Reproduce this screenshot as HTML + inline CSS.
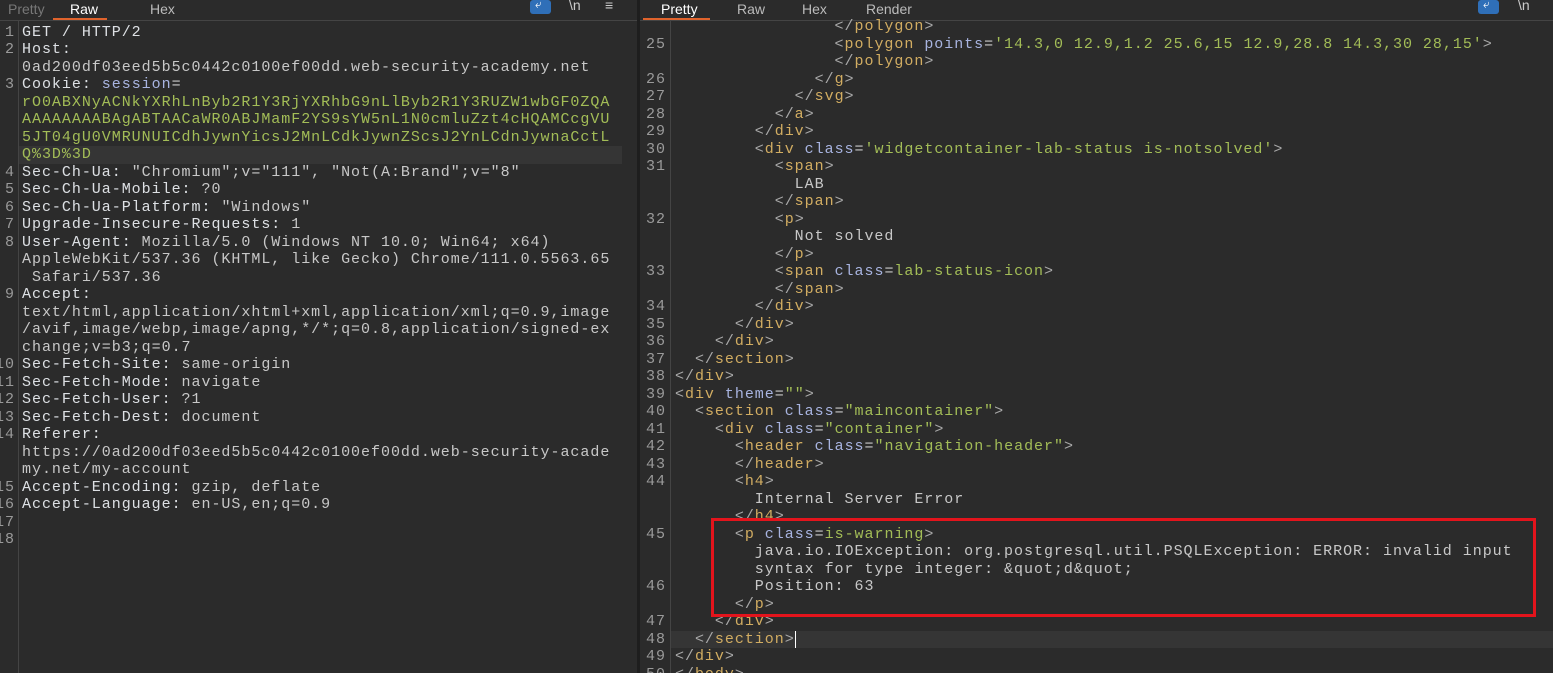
<!DOCTYPE html>
<html><head><meta charset="utf-8"><style>
*{margin:0;padding:0;box-sizing:border-box}
body{width:1553px;height:673px;background:#2b2b2b;overflow:hidden;position:relative;font-family:"Liberation Mono",monospace}
.pane{position:absolute;top:0;height:673px;overflow:hidden;background:#2b2b2b}
.tabs{position:absolute;left:0;right:0;top:0;height:21px;border-bottom:1px solid #444;font-family:"Liberation Sans",sans-serif;font-size:14px;color:#bbb}
.tab{position:absolute;top:1px}
.ul{position:absolute;top:18px;height:2px;background:#e0632c}
.row{position:absolute;height:17.5px;line-height:17.5px;font-size:15px;letter-spacing:0.97px;white-space:pre;color:#c8c8c8}
.num{position:absolute;height:17.5px;line-height:17.5px;font-size:15px;letter-spacing:0.97px;white-space:pre;color:#9a9a9a;text-align:right}
.g{color:#a3bd57}.b{color:#a8b4e0}.t{color:#d2ad62}.p{color:#a9a9a9}.w{color:#dde0e4}
.gut{position:absolute;top:21px;width:1px;height:660px;background:#444}
.ico{position:absolute;top:0;width:21px;height:14px;background:#2f6fb8;border-radius:3px}
</style></head><body>
<div class="pane" style="left:0;width:637px">
 <div class="tabs">
  <span class="tab" style="left:8px;color:#777">Pretty</span>
  <span class="tab" style="left:70px;color:#fff">Raw</span>
  <span class="tab" style="left:150px">Hex</span>
  <div class="ul" style="left:53px;width:54px"></div>
  <div class="ico" style="left:530px"><span style="position:absolute;left:5px;top:-3px;color:#fff;font-size:12px">⤶</span></div>
  <span class="tab" style="left:569px;top:-3px;color:#ccc">\n</span>
  <span class="tab" style="left:605px;top:-3px;color:#ccc">≡</span>
 </div>
 <div class="gut" style="left:18px"></div>
 <div style="position:absolute;left:19px;top:146px;width:603px;height:17.5px;background:#353535"></div>
 <div id="L"></div>
</div>
<div style="position:absolute;left:637px;top:0;width:3px;height:673px;background:#1e1e1e"></div>
<div class="pane" style="left:640px;width:913px">
 <div class="tabs">
  <span class="tab" style="left:21px;color:#fff">Pretty</span>
  <span class="tab" style="left:97px">Raw</span>
  <span class="tab" style="left:162px">Hex</span>
  <span class="tab" style="left:226px">Render</span>
  <div class="ul" style="left:3px;width:67px"></div>
  <div class="ico" style="left:838px"><span style="position:absolute;left:5px;top:-3px;color:#fff;font-size:12px">⤶</span></div>
  <span class="tab" style="left:878px;top:-3px;color:#ccc">\n</span>
 </div>
 <div class="gut" style="left:30px"></div>
 <div style="position:absolute;left:31px;top:630.75px;width:882px;height:17.5px;background:#353535"></div>
 <div id="R"></div>
 <div style="position:absolute;left:71px;top:518px;width:825px;height:99px;border:3px solid #e3141c"></div>
</div>
<script>
var L=[
["1",'<span class="w">GET / HTTP/2</span>'],
["2",'<span class="w">Host:</span>'],
["",'0ad200df03eed5b5c0442c0100ef00dd.web-security-academy.net'],
["3",'<span class="w">Cookie: </span><span class="b">session</span>='],
["",'<span class="g">rO0ABXNyACNkYXRhLnByb2R1Y3RjYXRhbG9nLlByb2R1Y3RUZW1wbGF0ZQA</span>'],
["",'<span class="g">AAAAAAAABAgABTAACaWR0ABJMamF2YS9sYW5nL1N0cmluZzt4cHQAMCcgVU</span>'],
["",'<span class="g">5JT04gU0VMRUNUICdhJywnYicsJ2MnLCdkJywnZScsJ2YnLCdnJywnaCctL</span>'],
["",'<span class="g">Q%3D%3D</span>'],
["4",'<span class="w">Sec-Ch-Ua:</span> "Chromium";v="111", "Not(A:Brand";v="8"'],
["5",'<span class="w">Sec-Ch-Ua-Mobile:</span> ?0'],
["6",'<span class="w">Sec-Ch-Ua-Platform:</span> "Windows"'],
["7",'<span class="w">Upgrade-Insecure-Requests:</span> 1'],
["8",'<span class="w">User-Agent:</span> Mozilla/5.0 (Windows NT 10.0; Win64; x64)'],
["",'AppleWebKit/537.36 (KHTML, like Gecko) Chrome/111.0.5563.65'],
["",' Safari/537.36'],
["9",'<span class="w">Accept:</span>'],
["",'text/html,application/xhtml+xml,application/xml;q=0.9,image'],
["",'/avif,image/webp,image/apng,*/*;q=0.8,application/signed-ex'],
["",'change;v=b3;q=0.7'],
["10",'<span class="w">Sec-Fetch-Site:</span> same-origin'],
["11",'<span class="w">Sec-Fetch-Mode:</span> navigate'],
["12",'<span class="w">Sec-Fetch-User:</span> ?1'],
["13",'<span class="w">Sec-Fetch-Dest:</span> document'],
["14",'<span class="w">Referer:</span>'],
["",'https://0ad200df03eed5b5c0442c0100ef00dd.web-security-acade'],
["",'my.net/my-account'],
["15",'<span class="w">Accept-Encoding:</span> gzip, deflate'],
["16",'<span class="w">Accept-Language:</span> en-US,en;q=0.9'],
["17",''],["18",'']];
var h='';
L.forEach(function(r,i){var t=23.5+i*17.5;
h+='<div class="num" style="right:622px;width:40px;top:'+t+'px">'+r[0]+'</div>';
h+='<div class="row" style="left:22px;top:'+t+'px">'+r[1]+'</div>';});
document.getElementById('L').innerHTML=h;
function tg(n){return '<span class="p">&lt;</span><span class="t">'+n+'</span>'}
function ct(n){return '<span class="p">&lt;/</span><span class="t">'+n+'</span><span class="p">&gt;</span>'}
var gt='<span class="p">&gt;</span>';
function at(a,v){return ' <span class="b">'+a+'</span>=<span class="g">'+v+'</span>'}
var R=[
["",16,ct('polygon')],
["25",16,tg('polygon')+at('points',"'14.3,0 12.9,1.2 25.6,15 12.9,28.8 14.3,30 28,15'")+gt],
["",16,ct('polygon')],
["26",14,ct('g')],["27",12,ct('svg')],["28",10,ct('a')],["29",8,ct('div')],
["30",8,tg('div')+at('class',"'widgetcontainer-lab-status is-notsolved'")+gt],
["31",10,tg('span')+gt],["",12,'LAB'],["",10,ct('span')],
["32",10,tg('p')+gt],["",12,'Not solved'],["",10,ct('p')],
["33",10,tg('span')+at('class','lab-status-icon')+gt],["",10,ct('span')],
["34",8,ct('div')],["35",6,ct('div')],["36",4,ct('div')],["37",2,ct('section')],["38",0,ct('div')],
["39",0,tg('div')+at('theme','""')+gt],
["40",2,tg('section')+at('class','"maincontainer"')+gt],
["41",4,tg('div')+at('class','"container"')+gt],
["42",6,tg('header')+at('class','"navigation-header"')+gt],
["43",6,ct('header')],
["44",6,tg('h4')+gt],["",8,'Internal Server Error'],["",6,ct('h4')],
["45",6,tg('p')+at('class','is-warning')+gt],
["",8,'java.io.IOException: org.postgresql.util.PSQLException: ERROR: invalid input'],
["",8,'syntax for type integer: &amp;quot;d&amp;quot;'],
["46",8,'Position: 63'],["",6,ct('p')],
["47",4,ct('div')],["48",2,ct('section')+'<span style="border-left:1.5px solid #fff"></span>'],["49",0,ct('div')],["50",0,ct('body')]];
h='';
R.forEach(function(r,i){var t=18.25+i*17.5;
h+='<div class="num" style="left:0;width:26px;top:'+t+'px">'+r[0]+'</div>';
h+='<div class="row" style="left:35px;top:'+t+'px">'+' '.repeat(r[1])+r[2]+'</div>';});
document.getElementById('R').innerHTML=h;
</script>
</body></html>
